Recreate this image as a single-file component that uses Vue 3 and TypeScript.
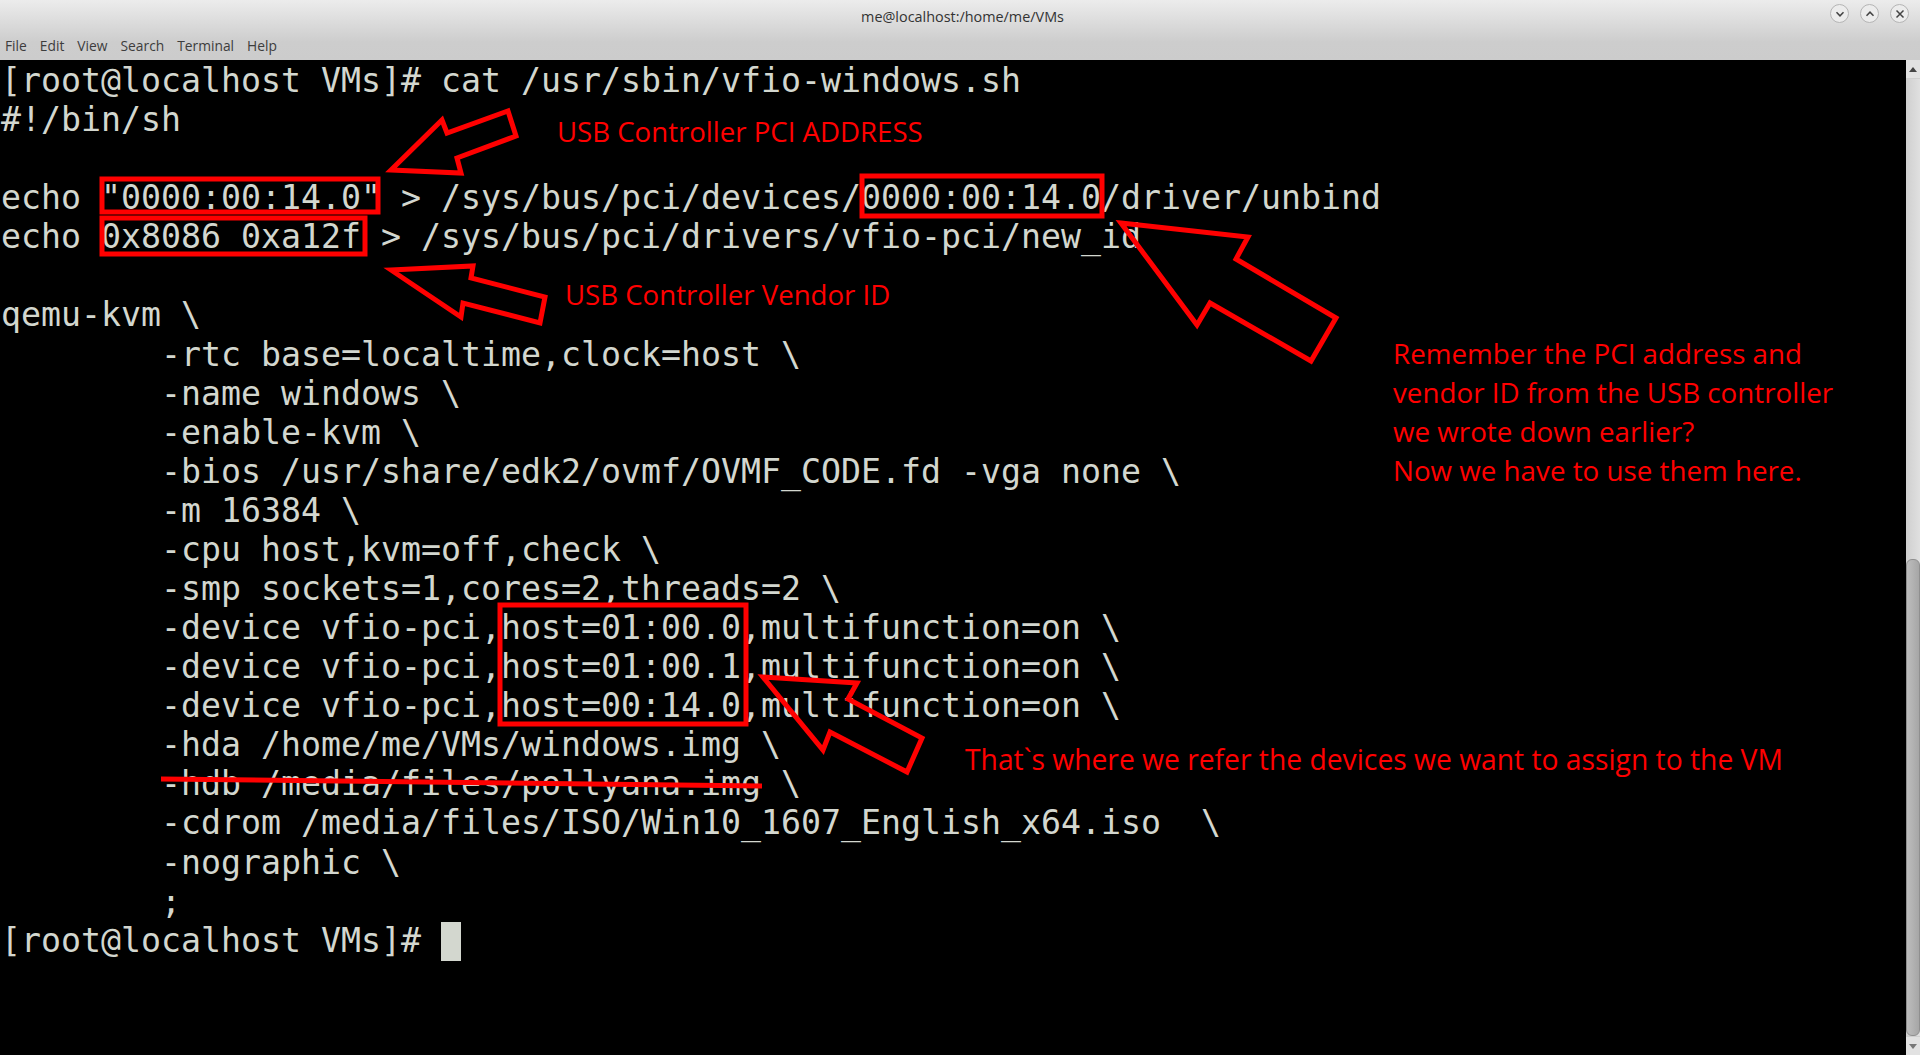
<script setup lang="ts">
const lines: string[] = [
  '[root@localhost VMs]# cat /usr/sbin/vfio-windows.sh',
  '#!/bin/sh',
  '',
  'echo "0000:00:14.0" > /sys/bus/pci/devices/0000:00:14.0/driver/unbind',
  'echo 0x8086 0xa12f > /sys/bus/pci/drivers/vfio-pci/new_id',
  '',
  'qemu-kvm \\',
  '        -rtc base=localtime,clock=host \\',
  '        -name windows \\',
  '        -enable-kvm \\',
  '        -bios /usr/share/edk2/ovmf/OVMF_CODE.fd -vga none \\',
  '        -m 16384 \\',
  '        -cpu host,kvm=off,check \\',
  '        -smp sockets=1,cores=2,threads=2 \\',
  '        -device vfio-pci,host=01:00.0,multifunction=on \\',
  '        -device vfio-pci,host=01:00.1,multifunction=on \\',
  '        -device vfio-pci,host=00:14.0,multifunction=on \\',
  '        -hda /home/me/VMs/windows.img \\',
  '        -hdb /media/files/pollyana.img \\',
  '        -cdrom /media/files/ISO/Win10_1607_English_x64.iso  \\',
  '        -nographic \\',
  '        ;',
]
const menus: string[] = ['File', 'Edit', 'View', 'Search', 'Terminal', 'Help']
const arrows: string[] = [
  '391,170 442,120 447,133 508,111 516,136 457,158 461,173',
  '391,270 473,266 471,278 545,297 540,323 463,303 461,317',
  '1121,223 1248,237 1236,259 1336,318 1311,361 1210,303 1197,325',
  '763,677 857,683 848,699 922,738 907,772 830,732 823,750',
]
const boxes = [
  { x: 102, y: 179, w: 276, h: 33 },
  { x: 102, y: 218, w: 263, h: 36 },
  { x: 862, y: 176, w: 240, h: 40 },
  { x: 500, y: 605, w: 246, h: 119 },
]
const note: string[] = [
  'Remember the PCI address and',
  'vendor ID from the USB controller',
  'we wrote down earlier?',
  'Now we have to use them here.',
]
</script>

<template>
  <div class="window">
    <header class="chrome">
      <div class="titlebar">
        <span class="title">me@localhost:/home/me/VMs</span>
        <div class="controls">
          <span class="ctl">
            <svg width="10" height="10" viewBox="0 0 10 10"><path d="M1.5 3.2 5 6.8 8.5 3.2" /></svg>
          </span>
          <span class="ctl">
            <svg width="10" height="10" viewBox="0 0 10 10"><path d="M1.5 6.8 5 3.2 8.5 6.8" /></svg>
          </span>
          <span class="ctl">
            <svg width="10" height="10" viewBox="0 0 10 10"><path d="M1.5 1.5 8.5 8.5M8.5 1.5 1.5 8.5" /></svg>
          </span>
        </div>
      </div>
      <nav class="menubar">
        <span v-for="m in menus" :key="m">{{ m }}</span>
      </nav>
    </header>
    <main class="body">
      <div class="term">
        <div v-for="(l, i) in lines" :key="i" class="line">{{ l }}</div>
        <div class="line">[root@localhost VMs]# <span class="cursor"></span></div>
      </div>
      <aside class="scrollbar">
        <div class="sb-btn"><i class="tri up"></i></div>
        <div class="track">
          <div class="thumb"></div>
        </div>
        <div class="sb-btn down"><i class="tri dn"></i></div>
      </aside>

      <svg class="ink" width="1920" height="1055" viewBox="0 0 1920 1055">
        <rect v-for="(b, i) in boxes" :key="'b' + i" :x="b.x" :y="b.y" :width="b.w" :height="b.h" />
        <polygon v-for="(a, i) in arrows" :key="'a' + i" :points="a" />
        <line x1="161" y1="779" x2="762" y2="786" />
      </svg>

      <span class="label l1">USB Controller PCI ADDRESS</span>
      <span class="label l2">USB Controller Vendor ID</span>
      <div class="label l3"><div v-for="n in note" :key="n">{{ n }}</div></div>
      <span class="label l4">That`s where we refer the devices we want to assign to the VM</span>
    </main>
  </div>
</template>

<style>
html, body { margin: 0; background: #000; overflow: hidden; }
</style>

<style scoped>
.window {
  width: 1920px;
  height: 1055px;
  display: flex;
  flex-direction: column;
  overflow: hidden;
}
.chrome {
  height: 60px;
  flex: none;
  background: linear-gradient(#ececec 0, #cdcdcd 42px, #cccccc 100%);
  font-family: "Open Sans", sans-serif;
  color: #3d3d3d;
  display: flex;
  flex-direction: column;
}
.titlebar {
  height: 33px;
  position: relative;
  display: flex;
  align-items: center;
  justify-content: center;
}
.title { font-size: 14.4px; color: #333; padding-left: 5px; }
.controls {
  position: absolute;
  right: 11px;
  top: 4px;
  display: flex;
  gap: 11px;
}
.ctl {
  width: 17px;
  height: 17px;
  border-radius: 50%;
  border: 1px solid #b5b5b5;
  background: #ececec;
  display: flex;
  align-items: center;
  justify-content: center;
}
.ctl path { fill: none; stroke: #444; stroke-width: 1.5; }
.menubar {
  display: flex;
  gap: 13px;
  padding-left: 5px;
  font-size: 13.8px;
  line-height: 26px;
}
.body {
  position: relative;
  flex: 1;
  display: flex;
  background: #000;
  min-height: 0;
}
.term {
  flex: 1;
  font-family: "DejaVu Sans Mono", monospace;
  font-size: 33.22px;
  line-height: 39.08px;
  color: #d3d7cf;
  white-space: pre;
  padding: 1px 0 0 1px;
  overflow: hidden;
}
.line { height: 39.08px; }
.cursor {
  display: inline-block;
  width: 20px;
  height: 39px;
  background: #d3d7cf;
  vertical-align: -9px;
}
.scrollbar {
  width: 14px;
  flex: none;
  display: flex;
  flex-direction: column;
  background: #dcdcdc;
}
.sb-btn {
  height: 18px;
  flex: none;
  display: flex;
  align-items: center;
  justify-content: center;
  background: #e2e2e2;
  border-bottom: 1px solid #cfcfcf;
}
.sb-btn.down { border-bottom: 0; border-top: 1px solid #cfcfcf; }
.tri { width: 0; height: 0; border-left: 4px solid transparent; border-right: 4px solid transparent; }
.tri.up { border-bottom: 5px solid #444; }
.tri.dn { border-top: 5px solid #777; }
.track {
  flex: 1;
  display: flex;
  flex-direction: column;
  justify-content: flex-end;
  background: linear-gradient(90deg, #cfcfcf, #e0e0e0);
}
.thumb {
  height: 477px;
  border: 1px solid #8f8f8f;
  border-radius: 6px;
  box-sizing: border-box;
  background: linear-gradient(90deg, #bdbdbd, #a6a6a6);
}
.ink {
  position: absolute;
  left: 0;
  top: -60px;
  pointer-events: none;
}
.ink rect, .ink polygon { fill: none; stroke: #f00; stroke-width: 5; stroke-miterlimit: 10; }
.ink line { stroke: #f00; stroke-width: 5; }
.label {
  position: absolute;
  font-family: "Open Sans", sans-serif;
  font-size: 27.6px;
  color: #f00;
  white-space: nowrap;
  line-height: 39.1px;
}
.l1 { left: 557px; top: 52px; }
.l2 { left: 565px; top: 215px; }
.l3 { left: 1393px; top: 274px; font-size: 27.75px; }
.l4 { left: 965px; top: 680px; font-size: 28.25px; }
</style>
